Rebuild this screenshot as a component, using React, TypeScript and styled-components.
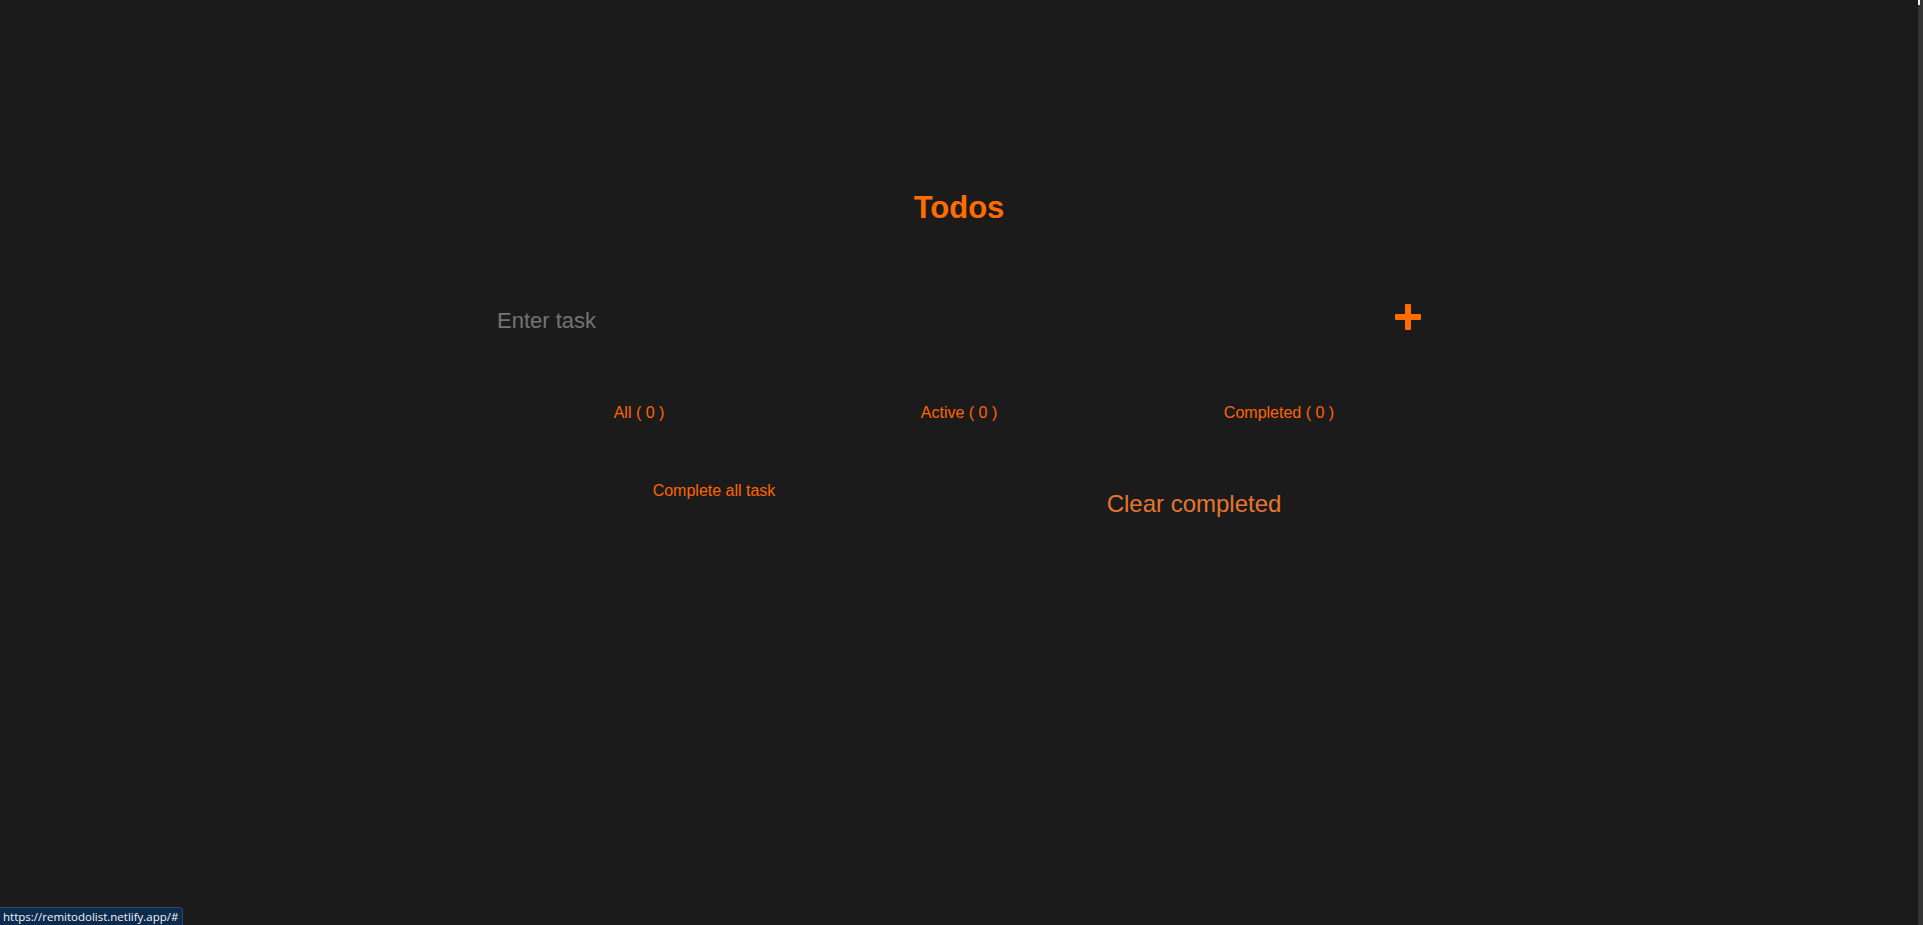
import React from "react";
import styled, { createGlobalStyle } from "styled-components";

const GlobalStyle = createGlobalStyle`
  html, body {
    margin: 0;
    padding: 0;
    background: #1b1b1b;
    overflow: hidden;
  }
  * { box-sizing: border-box; }
`;

const Page = styled.div`
  display: flex;
  height: 100vh;
  background: #1b1b1b;
  font-family: "Liberation Sans", Arial, sans-serif;
`;

const Main = styled.main`
  flex: 1;
  padding-top: 190px;
`;

const Container = styled.section`
  width: 960px;
  margin: 0 auto;
  display: flex;
  flex-direction: column;
`;

const Title = styled.h1`
  margin: 0;
  text-align: center;
  font-size: 31px;
  line-height: 36px;
  font-weight: 700;
  color: #ff6d00;
`;

const InputRow = styled.form`
  margin-top: 72px;
  height: 46px;
  padding: 0 18px;
  display: flex;
  align-items: center;
  gap: 16px;
`;

const TaskInput = styled.input`
  flex: 1;
  height: 46px;
  padding: 0;
  border: none;
  outline: none;
  background: transparent;
  color: #e0e0e0;
  font-family: "Liberation Sans", Arial, sans-serif;
  font-size: 22px;
  &::placeholder {
    color: #737373;
  }
`;

const AddButton = styled.button`
  width: 26px;
  height: 26px;
  padding: 0;
  margin-bottom: 8px;
  border: none;
  background: transparent;
  display: flex;
  cursor: pointer;
`;

const Filters = styled.nav`
  margin-top: 60px;
  display: grid;
  grid-template-columns: repeat(3, 1fr);
`;

const FilterLink = styled.a`
  text-align: center;
  font-size: 16px;
  line-height: 18px;
  color: #ff6400;
  text-decoration: none;
  cursor: pointer;
`;

const Actions = styled.div`
  margin-top: 60px;
  margin-left: -5px;
  margin-right: 5px;
  display: grid;
  grid-template-columns: 1fr 1fr;
  align-items: start;
`;

const ActionButton = styled.button<{ $large?: boolean }>`
  justify-self: center;
  padding: 0;
  margin-top: ${(p) => (p.$large ? "8px" : "0")};
  border: none;
  background: transparent;
  font-family: "Liberation Sans", Arial, sans-serif;
  font-size: ${(p) => (p.$large ? "24px" : "16px")};
  line-height: ${(p) => (p.$large ? "28px" : "18px")};
  color: ${(p) => (p.$large ? "#e8752f" : "#ff6400")};
  cursor: pointer;
`;

const ScrollTrack = styled.div`
  width: 5px;
  height: 100%;
  background: #333333;
  display: flex;
  flex-direction: column;
`;

const ScrollThumb = styled.div`
  width: 2px;
  height: 5px;
  background: #f2f2f2;
`;

const StatusBar = styled.div`
  position: fixed;
  left: 0;
  bottom: 0;
  height: 18px;
  padding: 0 4px 0 3px;
  background: #0d2b4c;
  border: 1px solid #2b4a6e;
  border-left: none;
  border-bottom: none;
  border-top-right-radius: 4px;
  color: #eef3f8;
  font-family: "Open Sans", "Noto Sans", sans-serif;
  font-size: 11.5px;
  line-height: 17px;
  white-space: nowrap;
`;

function PlusIcon() {
  return (
    <svg width="26" height="26" viewBox="0 0 26 26">
      <rect x="10" y="0" width="6" height="26" rx="1" fill="#ff6d00" />
      <rect x="0" y="10" width="26" height="6" rx="1" fill="#ff6d00" />
    </svg>
  );
}

export default function App() {
  const filters = ["All ( 0 )", "Active ( 0 )", "Completed ( 0 )"];
  return (
    <>
      <GlobalStyle />
      <Page>
        <Main>
          <Container>
            <Title>Todos</Title>
            <InputRow onSubmit={(e) => e.preventDefault()}>
              <TaskInput placeholder="Enter task" />
              <AddButton type="submit" aria-label="Add task">
                <PlusIcon />
              </AddButton>
            </InputRow>
            <Filters>
              {filters.map((f) => (
                <FilterLink key={f} href="#">
                  {f}
                </FilterLink>
              ))}
            </Filters>
            <Actions>
              <ActionButton>Complete all task</ActionButton>
              <ActionButton $large>Clear completed</ActionButton>
            </Actions>
          </Container>
        </Main>
        <ScrollTrack>
          <ScrollThumb />
        </ScrollTrack>
      </Page>
      <StatusBar>https://remitodolist.netlify.app/#</StatusBar>
    </>
  );
}
